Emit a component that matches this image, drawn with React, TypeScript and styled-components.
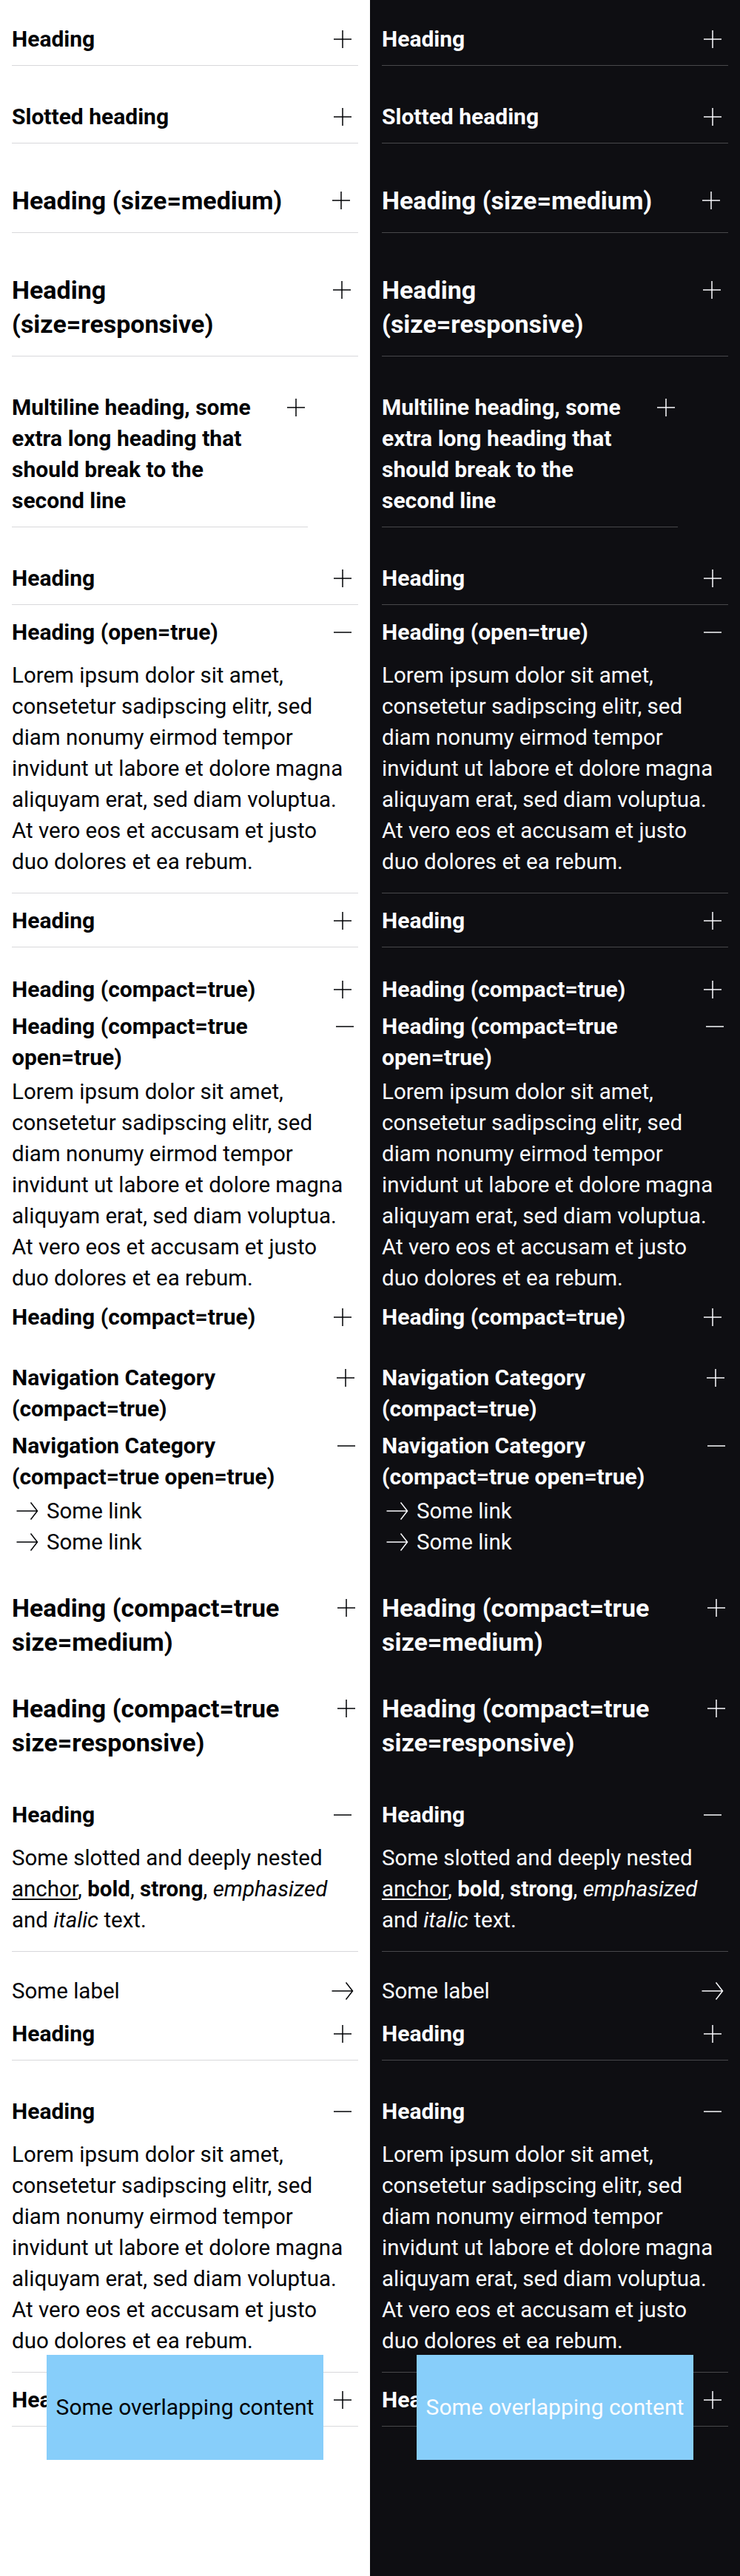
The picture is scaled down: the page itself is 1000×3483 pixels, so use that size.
import React from 'react'
import styled, { createGlobalStyle, ThemeProvider } from 'styled-components'

type Size = 'small' | 'medium'

const lightTheme = {
  background: '#FFFFFF',
  primary: '#010205',
  contrastLow: '#D8D8DB',
}

const darkTheme = {
  background: '#0E0E12',
  primary: '#FBFCFF',
  contrastLow: '#48484B',
}

const HEADING = {
  small: { fontSize: 30, lineHeight: 42 },
  medium: { fontSize: 34, lineHeight: 46 },
}

const SUMMARY_PADDING = {
  small: { regular: '16px 0 14px', compact: '4px 0' },
  medium: { regular: '22px 0 20px', compact: '6px 0' },
}

const LOREM =
  'Lorem ipsum dolor sit amet, consetetur sadipscing elitr, sed diam nonumy eirmod tempor invidunt ut labore et dolore magna aliquyam erat, sed diam voluptua. At vero eos et accusam et justo duo dolores et ea rebum.'

const GlobalStyle = createGlobalStyle`
  * {
    box-sizing: border-box;
  }

  html,
  body {
    margin: 0;
    padding: 0;
  }

  body {
    font-family: Roboto, 'Liberation Sans', Arial, sans-serif;
    -webkit-font-smoothing: antialiased;
  }
`

const Page = styled.div`
  display: grid;
  grid-template-columns: 1fr 1fr;
  min-height: 100vh;
`

const Playground = styled.div`
  display: flex;
  flex-direction: column;
  gap: 32px;
  padding: 16px;
  background-color: ${({ theme }) => theme.background};
  color: ${({ theme }) => theme.primary};
`

const Group = styled.div`
  position: relative;
  display: flex;
  flex-direction: column;
`

const AccordionRoot = styled.div<{ $compact: boolean; $maxWidth?: number }>`
  max-width: ${({ $maxWidth }) => ($maxWidth ? `${$maxWidth}px` : 'none')};
  border-bottom: ${({ $compact, theme }) =>
    $compact ? 'none' : `1px solid ${theme.contrastLow}`};
`

const Summary = styled.div<{ $size: Size; $compact: boolean }>`
  display: flex;
  align-items: flex-start;
  justify-content: space-between;
  gap: 24px;
  padding: ${({ $size, $compact }) =>
    SUMMARY_PADDING[$size][$compact ? 'compact' : 'regular']};
`

const HeadingText = styled.h2<{ $size: Size }>`
  flex: 0 1 auto;
  min-width: 0;
  margin: 0;
  font-size: ${({ $size }) => HEADING[$size].fontSize}px;
  line-height: ${({ $size }) => HEADING[$size].lineHeight}px;
  font-weight: 700;
`

const IconBox = styled.span<{ $box: number }>`
  display: flex;
  flex: 0 1 ${({ $box }) => $box}px;
  align-items: center;
  justify-content: center;
  min-width: 32px;
  height: ${({ $box }) => $box}px;
`

const Glyph = styled.svg`
  display: block;
  flex: none;
  overflow: visible;
`

const Collapsible = styled.div<{ $compact: boolean }>`
  padding: ${({ $compact }) => ($compact ? '0 0 7px' : '2px 0 21px')};
  font-size: 29.5px;
  line-height: 42px;
  font-weight: 400;
`

const Paragraph = styled.p`
  margin: 0;
`

const InlineAnchor = styled.a`
  color: inherit;
  text-decoration: underline;
  text-underline-offset: 3px;
`

const NavLink = styled.a`
  display: flex;
  align-items: flex-start;
  gap: 5px;
  color: inherit;
  text-decoration: none;
  font-size: 29.5px;
  line-height: 42px;
`

const LabelLink = styled.a`
  display: flex;
  align-items: flex-start;
  justify-content: space-between;
  color: inherit;
  text-decoration: none;
  font-size: 29.5px;
  line-height: 42px;
`

const Overlap = styled.div`
  position: absolute;
  top: 366px;
  left: 47px;
  z-index: 1;
  display: flex;
  align-items: center;
  justify-content: center;
  width: 374px;
  height: 142px;
  background-color: #87cefa;
  font-size: 30px;
  line-height: 42px;
`

const Icon = ({ d }: { d: string }) => (
  <Glyph
    width={42}
    height={42}
    viewBox="0 0 42 42"
    fill="none"
    stroke="currentColor"
    strokeWidth={1.5}
  >
    <path d={d} />
  </Glyph>
)

const PLUS = 'M9 21h24M21 9v24'
const MINUS = 'M9 21h24'
const ARROW = 'M6.5 21h28M25.5 9.5 34.5 21l-9 11.5'

interface AccordionProps {
  heading: string
  size?: Size
  compact?: boolean
  open?: boolean
  maxWidth?: number
  children?: React.ReactNode
}

const Accordion: React.FC<AccordionProps> = ({
  heading,
  size = 'small',
  compact = false,
  open = false,
  maxWidth,
  children,
}) => (
  <AccordionRoot $compact={compact} $maxWidth={maxWidth}>
    <Summary $size={size} $compact={compact}>
      <HeadingText $size={size}>{heading}</HeadingText>
      <IconBox $box={HEADING[size].lineHeight}>
        <Icon d={open ? MINUS : PLUS} />
      </IconBox>
    </Summary>
    {open && <Collapsible $compact={compact}>{children}</Collapsible>}
  </AccordionRoot>
)

const SomeLink = () => (
  <NavLink href="#">
    <IconBox $box={42}>
      <Icon d={ARROW} />
    </IconBox>
    Some link
  </NavLink>
)

const Showcase = () => (
  <Playground>
    <Group>
      <Accordion heading="Heading" />
    </Group>
    <Group>
      <Accordion heading="Slotted heading" />
    </Group>
    <Group>
      <Accordion heading="Heading (size=medium)" size="medium" />
    </Group>
    <Group>
      <Accordion heading="Heading (size=responsive)" size="medium" />
    </Group>
    <Group>
      <Accordion
        heading="Multiline heading, some extra long heading that should break to the second line"
        maxWidth={400}
      />
    </Group>
    <Group>
      <Accordion heading="Heading" />
      <Accordion heading="Heading (open=true)" open>
        <Paragraph>{LOREM}</Paragraph>
      </Accordion>
      <Accordion heading="Heading" />
    </Group>
    <Group>
      <Accordion heading="Heading (compact=true)" compact />
      <Accordion heading="Heading (compact=true open=true)" compact open>
        <Paragraph>{LOREM}</Paragraph>
      </Accordion>
      <Accordion heading="Heading (compact=true)" compact />
    </Group>
    <Group>
      <Accordion heading="Navigation Category (compact=true)" compact />
      <Accordion
        heading="Navigation Category (compact=true open=true)"
        compact
        open
      >
        <SomeLink />
        <SomeLink />
      </Accordion>
    </Group>
    <Group>
      <Accordion
        heading="Heading (compact=true size=medium)"
        size="medium"
        compact
      />
    </Group>
    <Group>
      <Accordion
        heading="Heading (compact=true size=responsive)"
        size="medium"
        compact
      />
    </Group>
    <Group>
      <Accordion heading="Heading" open>
        <Paragraph>
          Some slotted and deeply nested <InlineAnchor href="#">anchor</InlineAnchor>,{' '}
          <b>bold</b>, <strong>strong</strong>, <em>emphasized</em> and{' '}
          <i>italic</i> text.
        </Paragraph>
      </Accordion>
    </Group>
    <Group>
      <LabelLink href="#">
        Some label
        <IconBox $box={42}>
          <Icon d={ARROW} />
        </IconBox>
      </LabelLink>
      <Accordion heading="Heading" />
    </Group>
    <Group>
      <Accordion heading="Heading" open>
        <Paragraph>{LOREM}</Paragraph>
      </Accordion>
      <Accordion heading="Heading" />
      <Overlap>Some overlapping content</Overlap>
    </Group>
  </Playground>
)

export default function App() {
  return (
    <>
      <GlobalStyle />
      <Page>
        <ThemeProvider theme={lightTheme}>
          <Showcase />
        </ThemeProvider>
        <ThemeProvider theme={darkTheme}>
          <Showcase />
        </ThemeProvider>
      </Page>
    </>
  )
}
